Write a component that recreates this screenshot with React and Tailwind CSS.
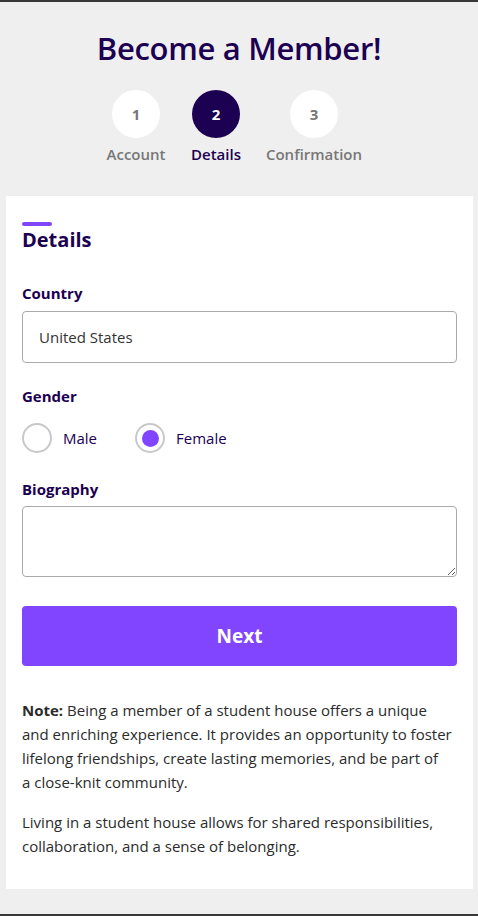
import React, { useState } from 'react';

const steps = [
  { n: 1, label: 'Account', w: 'w-[60px]' },
  { n: 2, label: 'Details', w: 'w-[52px]', active: true },
  { n: 3, label: 'Confirmation', w: 'w-[96px]' },
];

const Radio = ({ checked, label, onClick }) => (
  <button type="button" onClick={onClick} className="flex items-center gap-[11px]">
    <span className="w-[30px] h-[30px] rounded-full border-2 border-[#c8c8c8] bg-white flex items-center justify-center">
      {checked && <span className="w-[17px] h-[17px] rounded-full bg-[#8145ff]" />}
    </span>
    <span className="text-[15px] text-[#1c0051]">{label}</span>
  </button>
);

export default function App() {
  const [gender, setGender] = useState('female');

  return (
    <div className="min-h-[916px] bg-[#efefef] border-t-2 border-b-2 border-[#383838] font-['Open_Sans',sans-serif] pb-[25px]">
      <h1 className="pt-[28px] text-center text-[31px] leading-[36px] font-semibold text-[#1c0051] tracking-[-0.3px]">
        Become a Member!
      </h1>

      <div className="flex gap-[24px] ml-[106px] mt-[24px]">
        {steps.map(s => (
          <div key={s.n} className={`${s.w} flex flex-col items-center shrink-0`}>
            <div className={`w-[48px] h-[48px] rounded-full flex items-center justify-center text-[15px] font-bold ${s.active ? 'bg-[#1c0051] text-white' : 'bg-white text-[#777]'}`}>
              {s.n}
            </div>
            <span className={`mt-[6px] text-[15px] leading-[20px] font-semibold whitespace-nowrap ${s.active ? 'text-[#1c0051]' : 'text-[#777]'}`}>
              {s.label}
            </span>
          </div>
        ))}
      </div>

      <div className="ml-[6px] mr-[5px] mt-[32px] bg-white px-[16px] pt-[26px] pb-[31px]">
        <div className="w-[30px] h-[4px] rounded-full bg-[#8145ff]" />
        <h2 className="text-[20px] leading-[28px] font-bold text-[#1c0051]">Details</h2>

        <label className="block mt-[28px] text-[15px] leading-[22px] font-bold text-[#1c0051]">Country</label>
        <input
          defaultValue="United States"
          className="mt-[7px] w-full h-[52px] border border-[#aaa] rounded-[4px] px-[16px] text-[15px] text-[#333] outline-none"
        />

        <label className="block mt-[22px] text-[15px] leading-[22px] font-bold text-[#1c0051]">Gender</label>
        <div className="mt-[16px] flex gap-[38px]">
          <Radio label="Male" checked={gender === 'male'} onClick={() => setGender('male')} />
          <Radio label="Female" checked={gender === 'female'} onClick={() => setGender('female')} />
        </div>

        <label className="block mt-[25px] text-[15px] leading-[22px] font-bold text-[#1c0051]">Biography</label>
        <textarea className="block mt-[6px] w-full h-[71px] border border-[#aaa] rounded-[4px] p-2 text-[15px] outline-none" />

        <button className="mt-[29px] w-full h-[60px] rounded-[4px] bg-[#8145ff] text-white text-[19px] font-bold">
          Next
        </button>

        <p className="mt-[32px] text-[15px] leading-[24px] text-[#2b2b2b]">
          <strong className="font-bold">Note:</strong>{' '}Being a member of a student house offers a unique and enriching experience. It provides an opportunity to foster lifelong friendships, create lasting memories, and be part of a{'\u00a0'}close-knit community.
        </p>
        <p className="mt-[16px] text-[15px] leading-[24px] text-[#2b2b2b]">
          Living in a student house allows for shared responsibilities, collaboration, and a sense of belonging.
        </p>
      </div>
    </div>
  );
}
